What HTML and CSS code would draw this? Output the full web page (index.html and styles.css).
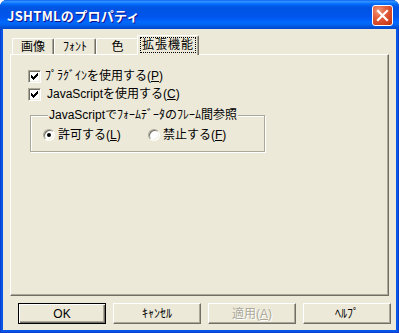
FILE: index.html
```html
<!DOCTYPE html>
<html lang="ja">
<head>
<meta charset="utf-8">
<title>JSHTMLのプロパティ</title>
<link rel="stylesheet" href="styles.css">
</head>
<body>
<div class="window">
  <div class="titlebar">
    <span class="title">JSHTMLのプロパティ</span>
    <span class="close">
      <svg width="21" height="21" viewBox="0 0 21 21"><path d="M6 6 L15 15 M15 6 L6 15" stroke="#fff" stroke-width="2.2" stroke-linecap="square" fill="none"/></svg>
    </span>
  </div>
  <div class="client">
    <div class="tabs">
      <div class="tab tab-image">画像</div>
      <div class="tab tab-font">ﾌｫﾝﾄ</div>
      <div class="tab tab-color">色</div>
      <div class="tab tab-ext active"><span class="focus">拡張機能</span></div>
    </div>
    <div class="panel">
      <div class="check">
        <span class="box"><svg width="9" height="9" viewBox="0 0 9 9"><g fill="#000"><rect x="1" y="3" width="1" height="3"/><rect x="2" y="4" width="1" height="3"/><rect x="3" y="5" width="1" height="3"/><rect x="4" y="4" width="1" height="3"/><rect x="5" y="3" width="1" height="3"/><rect x="6" y="2" width="1" height="3"/><rect x="7" y="1" width="1" height="3"/></g></svg></span>
        <span class="label">ﾌﾟﾗｸﾞｲﾝを使用する(<u>P</u>)</span>
      </div>
      <div class="check">
        <span class="box"><svg width="9" height="9" viewBox="0 0 9 9"><g fill="#000"><rect x="1" y="3" width="1" height="3"/><rect x="2" y="4" width="1" height="3"/><rect x="3" y="5" width="1" height="3"/><rect x="4" y="4" width="1" height="3"/><rect x="5" y="3" width="1" height="3"/><rect x="6" y="2" width="1" height="3"/><rect x="7" y="1" width="1" height="3"/></g></svg></span>
        <span class="label label-js">JavaScriptを使用する(<u>C</u>)</span>
      </div>
      <fieldset class="group">
        <legend>JavaScriptでﾌｫｰﾑﾃﾞｰﾀのﾌﾚｰﾑ間参照</legend>
        <div class="radios">
          <div class="radio radio-first"><span class="dot on"></span><span class="label">許可する(<u>L</u>)</span></div>
          <div class="radio"><span class="dot"></span><span class="label">禁止する(<u>F</u>)</span></div>
        </div>
      </fieldset>
    </div>
    <div class="buttons">
      <div class="btn default"><span>OK</span></div>
      <div class="btn"><span>ｷｬﾝｾﾙ</span></div>
      <div class="btn disabled"><span>適用(<u>A</u>)</span></div>
      <div class="btn"><span>ﾍﾙﾌﾟ</span></div>
    </div>
  </div>
</div>
</body>
</html>
```

FILE: styles.css
```css
html, body {
  margin: 0;
  padding: 0;
  background: #ffffff;
}

body {
  width: 399px;
  height: 333px;
  overflow: hidden;
  font-family: "Liberation Sans", "Noto Sans CJK JP", sans-serif;
  font-size: 12px;
  color: #000;
}

.window {
  width: 399px;
  height: 333px;
  box-sizing: border-box;
  display: flex;
  flex-direction: column;
  background: #0655e6;
  border-radius: 7px 7px 0 0;
  box-shadow: inset 1px 0 #0a3fcf, inset -1px 0 #0a3fcf, inset 0 -1px #0a3fcf;
  overflow: hidden;
}

.titlebar {
  height: 29px;
  flex: none;
  display: flex;
  align-items: center;
  justify-content: space-between;
  padding: 0 6px 0 7px;
  background: linear-gradient(to bottom, #0058ee 0%, #3593ff 4%, #288eff 7%, #127dff 10%, #036ffc 14%, #0262ee 18%, #0057e5 24%, #0054e3 30%, #0055eb 56%, #005bf5 66%, #026afe 76%, #0062ef 86%, #0052d6 94%, #0046cf 100%);
  box-sizing: border-box;
}

.title {
  color: #fff;
  font-family: "Noto Sans CJK JP", sans-serif;
  font-weight: bold;
  font-size: 13px;
  letter-spacing: 0.3px;
  text-shadow: 1px 1px #0f1089;
  padding-top: 1px;
}

.close {
  width: 21px;
  height: 21px;
  box-sizing: border-box;
  border: 1px solid #fff;
  border-radius: 3px;
  background: radial-gradient(circle at 30% 25%, #f09a7c 0%, #e4623e 35%, #cf3d1c 80%, #b8300f 100%);
  display: flex;
  align-items: center;
  justify-content: center;
  margin-top: 1px;
}

.close svg {
  display: block;
  margin: -1px;
}

.client {
  flex: 1;
  margin: 0 3px 3px 3px;
  background: #ece9d8;
  display: flex;
  flex-direction: column;
  padding-top: 6px;
}

.tabs {
  height: 19px;
  display: flex;
  align-items: flex-end;
  margin: 0 7px;
  padding-left: 2px;
  position: relative;
  z-index: 1;
}

.tab {
  height: 16px;
  box-sizing: border-box;
  border-top: 1px solid #fff;
  border-left: 1px solid #fff;
  border-right: 1px solid #716f64;
  box-shadow: inset -1px 0 #aca899;
  border-radius: 2px 2px 0 0;
  display: flex;
  align-items: center;
  justify-content: center;
  background: #ece9d8;
  line-height: 14px;
}

.tab-image { width: 42px; }
.tab-font { width: 42px; }
.tab-color { width: 43px; }

.tab.active {
  width: 62px;
  height: 20px;
  margin-left: -2px;
  margin-bottom: -1px;
  position: relative;
  padding-bottom: 2px;
}

.focus {
  outline: 1px dotted #000;
  outline-offset: 0;
  padding: 0 1px;
  letter-spacing: 1px;
  line-height: 14px;
}

.panel {
  height: 242px;
  box-sizing: border-box;
  margin: 0 7px;
  border-top: 1px solid #fff;
  border-left: 1px solid #fff;
  border-right: 1px solid #716f64;
  border-bottom: 1px solid #716f64;
  box-shadow: inset -1px -1px #aca899;
  padding: 12px 0 0 17px;
  display: flex;
  flex-direction: column;
}

.check {
  display: flex;
  align-items: center;
  height: 18px;
  gap: 4px;
}

.box {
  width: 13px;
  height: 13px;
  box-sizing: border-box;
  flex: none;
  background: #fff;
  border-top: 1px solid #aca899;
  border-left: 1px solid #aca899;
  border-right: 1px solid #fff;
  border-bottom: 1px solid #fff;
  box-shadow: inset 1px 1px #716f64, inset -1px -1px #f1efe2;
  padding: 1px;
}

.box svg {
  display: block;
}

.label {
  line-height: 14px;
  white-space: nowrap;
}

.label-js {
  padding-left: 2px;
}

u {
  text-underline-offset: 1px;
}

.group {
  margin: 5px 0 0 2px;
  width: 235px;
  box-sizing: border-box;
  padding: 0 0 8px 12px;
  border: 1px solid #aca899;
  box-shadow: 1px 1px 0 #fff, inset 1px 1px 0 #fff;
  min-inline-size: 0;
}

.group legend {
  padding: 0 1px;
  margin-left: 5px;
  line-height: 14px;
  background: #ece9d8;
}

.radios {
  display: flex;
  align-items: center;
  height: 16px;
  margin-top: 5px;
}

.radio {
  display: flex;
  align-items: center;
  gap: 3px;
}

.radio-first {
  width: 105px;
}

.dot {
  width: 12px;
  height: 12px;
  box-sizing: border-box;
  border-radius: 50%;
  background: #fff;
  border: 1px solid;
  border-color: #aca899 #fff #fff #aca899;
  box-shadow: inset 1px 1px #716f64, inset -1px -1px #f1efe2;
  display: flex;
  align-items: center;
  justify-content: center;
  flex: none;
}

.dot.on::after {
  content: "";
  width: 4px;
  height: 4px;
  border-radius: 50%;
  background: #000;
}

.buttons {
  display: flex;
  gap: 7px;
  padding-left: 15px;
  margin-top: 7px;
}

.btn {
  width: 88px;
  height: 21px;
  box-sizing: border-box;
  border-top: 1px solid #fff;
  border-left: 1px solid #fff;
  border-right: 1px solid #716f64;
  border-bottom: 1px solid #716f64;
  box-shadow: inset -1px -1px #aca899;
  display: flex;
  align-items: center;
  justify-content: center;
  line-height: 14px;
}

.btn.default {
  border: 1px solid #000;
  box-shadow: inset 1px 1px #fff, inset -1px -1px #716f64, inset -2px -2px #aca899;
}

.btn.disabled {
  color: #aca899;
  text-shadow: 1px 1px #fff;
}
```
